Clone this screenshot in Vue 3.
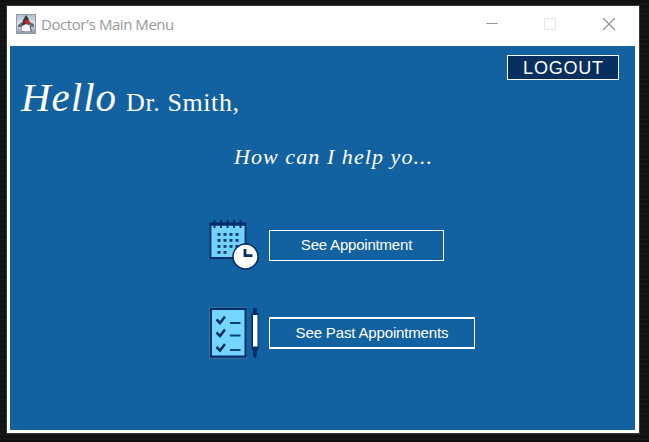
<script setup>
import { ref } from 'vue'

const doctor = ref('Dr. Smith,')
const dots = [0, 1, 2, 3].flatMap((row) =>
  [0, 1, 2, 3].filter((col) => row < 3 || col < 2).map((col) => ({ x: 8.5 + col * 6, y: 13 + row * 6 }))
)
</script>

<template>
  <div class="desktop">
    <main class="window">
      <header class="titlebar">
        <svg class="app-icon" width="20" height="20" viewBox="0 0 20 20">
          <defs>
            <linearGradient id="tile" x1="0" y1="0" x2="0" y2="1">
              <stop offset="0" stop-color="#aebccb" />
              <stop offset=".5" stop-color="#e3e8ee" />
              <stop offset="1" stop-color="#8795a5" />
            </linearGradient>
          </defs>
          <rect x=".5" y=".5" width="19" height="19" fill="url(#tile)" stroke="#8c9cac" />
          <path d="M2 11L6 8L14 8L18 10V13L15 12.500L16 18L11 16L6 18L5 13L2 13Z" fill="#686d73" />
          <path d="M7 9H13L14.500 17H6L5.500 14Z" fill="#f5f5f5" />
          <path d="M10 1Q13 4 13.500 8L13 11L10 10L6 12L7 6Z" fill="#37393d" />
          <circle cx="11" cy="8" r="2.300" fill="#d6202b" />
        </svg>
        <span class="title">Doctor's Main Menu</span>
        <svg class="controls" width="130" height="14" viewBox="0 0 130 14">
          <path d="M0 5.500H12" stroke="#999" fill="none" />
          <rect x="58.500" y=".5" width="11" height="11" fill="none" stroke="#e6e6e6" />
          <path d="M117 0L129 12M129 0L117 12" stroke="#8c8c8c" stroke-width="1.100" fill="none" />
        </svg>
      </header>

      <section class="panel">
        <div class="top"><button class="logout">LOGOUT</button></div>
        <h1 class="greeting"><span class="hello">Hello</span><span class="doctor">{{ doctor }}</span></h1>
        <p class="question">How can I help yo...</p>
        <div class="actions">
          <div class="action">
            <svg width="50" height="52" viewBox="0 0 50 52">
              <path d="M1.500 3.500H36.500V38H1.500Z" fill="#72d3ff" stroke="#082d68" stroke-width="1.800" />
              <path d="M1 4.500H37" stroke="#082d68" stroke-width="2.500" />
              <path d="M5.500 0V8M12 0V8M18.500 0V8M25 0V8M31.500 0V8" stroke="#082d68" stroke-width="1.800" />
              <rect v-for="(dot, i) in dots" :key="i" :x="dot.x" :y="dot.y" width="3" height="2.800" fill="#0c3b76" />
              <circle cx="36.500" cy="36.500" r="12.500" fill="#fff" stroke="#082d68" stroke-width="1.500" />
              <path d="M36 29V35.700H43.500" fill="none" stroke="#082d68" stroke-width="2.800" />
            </svg>
            <button class="choice">See Appointment</button>
          </div>
          <div class="action">
            <svg width="50" height="52" viewBox="0 0 50 52">
              <rect x=".5" y=".5" width="37" height="51" fill="none" stroke="#366f9c" />
              <rect x="2" y="2" width="34.500" height="47.500" fill="#74d6ff" stroke="#082d68" stroke-width="2" />
              <path d="M7.500 12.500L11 16L16 9.500M7.500 25.500L11 29L16 22.500M7.500 40L11 43.500L16 37" fill="none" stroke="#082d68" stroke-width="2.500" />
              <path d="M21 16H31.500M21 28.500H31.500M21 43H31.500" stroke="#0b4077" stroke-width="1.800" />
              <path d="M44 1H48V6H49.500V42L48 44V48L46.500 51H45L44 48V44L42.500 42V6H44Z" fill="#082d68" />
              <path d="M44 8H48.500V39.500H44Z" fill="#fff" />
            </svg>
            <button class="choice past">See Past Appointments</button>
          </div>
        </div>
      </section>
    </main>
  </div>
</template>

<style>
body { margin: 0; }
</style>

<style scoped>
* { box-sizing: border-box; }
.desktop {
  width: 649px;
  height: 442px;
  padding: 5px 9px 8px 6px;
  background: repeating-linear-gradient(0deg, #111 0 2px, #181818 2px 3px, #141414 3px 5px);
  overflow: hidden;
}
.window {
  width: 634px;
  height: 429px;
  border: 1px solid #383838;
  background: #fff;
  padding: 0 4px 3px 3px;
}
.titlebar {
  height: 40px;
  display: flex;
  align-items: flex-start;
  padding: 8px 19px 0 6px;
}
.app-icon { flex: none; }
.title {
  margin-left: 5px;
  font: 15px/21px "Open Sans", "Noto Sans", sans-serif;
  letter-spacing: -0.45px;
  color: #999;
  white-space: nowrap;
}
.controls { margin: 4px 0 0 auto; flex: none; }
.panel {
  height: 384px;
  background: #1261a0;
  color: #fff;
  overflow: hidden;
}
.top { display: flex; justify-content: flex-end; padding: 9px 16px 0 0; }
button {
  display: block;
  padding: 0;
  border: 1px solid #fff;
  border-radius: 0;
  color: #fff;
  font-family: "Liberation Sans", Arial, sans-serif;
  white-space: nowrap;
}
.logout {
  width: 112px;
  height: 25px;
  padding: 1px 0 0 1px;
  background: #072f5f;
  font-size: 18px;
  line-height: 22px;
  letter-spacing: 0.8px;
}
.greeting {
  display: flex;
  align-items: baseline;
  height: 50px;
  margin: 0;
  padding-left: 11px;
  font-family: "Liberation Serif", serif;
  font-weight: 400;
  line-height: 34px;
  white-space: nowrap;
}
.hello { width: 105px; font-size: 41px; font-style: italic; letter-spacing: 1px; }
.doctor { font-size: 26px; letter-spacing: 0.6px; }
.question {
  height: 44px;
  margin: 0;
  padding: 15px 0 0 224px;
  font: italic 22px/24px "Liberation Serif", serif;
  letter-spacing: 1.07px;
  white-space: nowrap;
}
.actions { display: grid; gap: 35px; padding: 46px 0 0 199px; }
.action { display: flex; align-items: center; gap: 10px; height: 52px; }
.choice {
  width: 175px;
  height: 31px;
  margin-bottom: 2px;
  background: #1261a0;
  font-size: 15px;
  line-height: 28px;
  letter-spacing: -0.2px;
}
.past { width: 206px; height: 32px; margin-bottom: 0; border-width: 2px 1px; letter-spacing: -0.15px; }
</style>
